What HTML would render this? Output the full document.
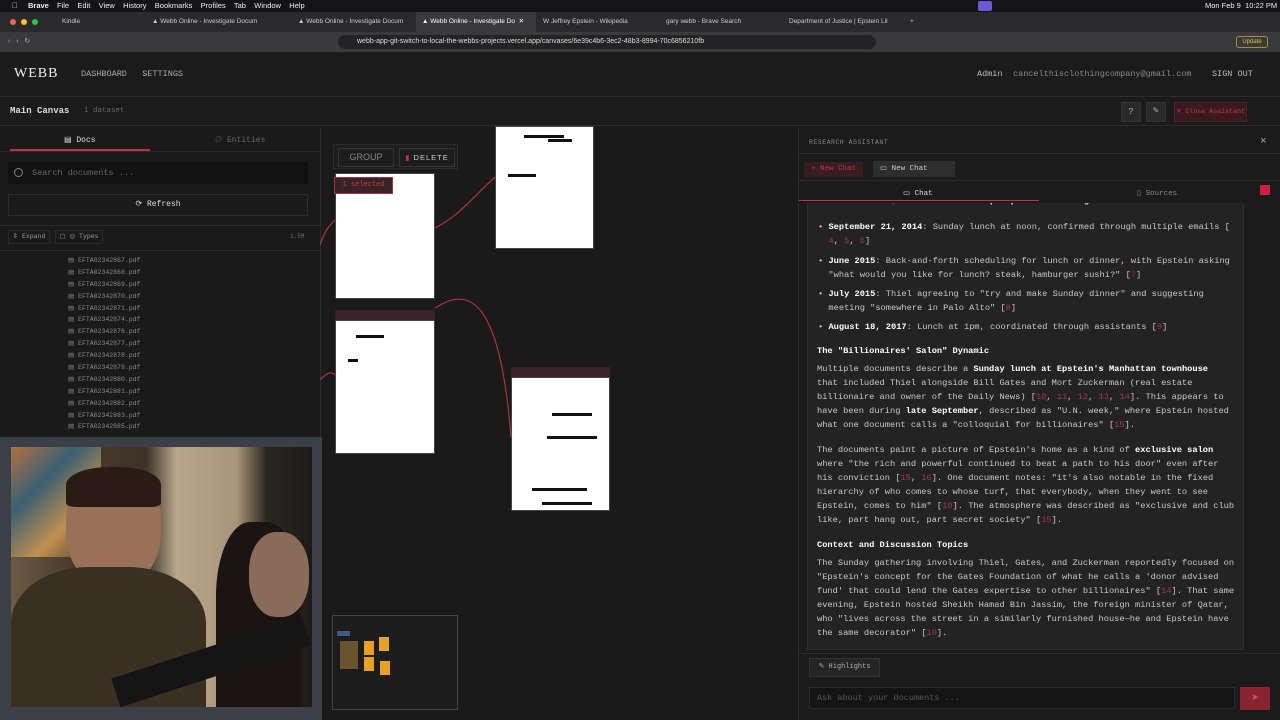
<!DOCTYPE html>
<html><head><meta charset="utf-8"><style>
*{box-sizing:border-box;margin:0;padding:0}
body{width:1280px;height:720px;overflow:hidden;background:#1a1a1a;font-family:"Liberation Mono",monospace;color:#ccc;position:relative}
.a{position:absolute;white-space:nowrap}
.sans{font-family:"Liberation Sans",sans-serif}
.doc{background:#fff;border:1px solid #444}
.bar{background:#111;height:3px;position:absolute}
.rt{font-size:8.7px;line-height:14px;color:#c8c8c8;white-space:nowrap}
.rt b{color:#fff}
.c{color:#a8324a}
.file{font-size:6.5px;color:#888;height:11.9px;line-height:11.9px}
</style></head><body>
<!-- menubar -->
<div class="a sans" style="left:0;top:0;width:1280px;height:12px;background:#141418;font-size:7.5px;color:#eee;line-height:12px">
<span class="a" style="left:12px">&#63743;</span><b class="a" style="left:28px">Brave</b><span class="a" style="left:57px">File&nbsp;&nbsp;&nbsp; Edit&nbsp;&nbsp;&nbsp; View&nbsp;&nbsp;&nbsp; History&nbsp;&nbsp;&nbsp; Bookmarks&nbsp;&nbsp;&nbsp; Profiles&nbsp;&nbsp;&nbsp; Tab&nbsp;&nbsp;&nbsp; Window&nbsp;&nbsp;&nbsp; Help</span>
<span class="a" style="left:978px;top:1px;width:14px;height:10px;background:#6b5bd6;border-radius:2px"></span>
<span class="a" style="left:1205px">Mon Feb 9&nbsp; 10:22 PM</span></div>
<!-- tabs -->
<div class="a sans" style="left:0;top:12px;width:1280px;height:20px;background:#2a2a2c;font-size:6.5px;color:#ccc;line-height:20px">
<span class="a" style="left:10px;top:7px;width:6px;height:6px;border-radius:3px;background:#ff5f57"></span>
<span class="a" style="left:21px;top:7px;width:6px;height:6px;border-radius:3px;background:#febc2e"></span>
<span class="a" style="left:32px;top:7px;width:6px;height:6px;border-radius:3px;background:#28c840"></span>
<span class="a" style="left:62px">Kindle</span>
<span class="a" style="left:152px">▲ Webb Online - Investigate Docum</span>
<span class="a" style="left:298px">▲ Webb Online - Investigate Docum</span>
<span class="a" style="left:416px;width:120px;height:20px;background:#3a3a3c;padding-left:6px;color:#fff">▲ Webb Online - Investigate Do &nbsp;✕</span>
<span class="a" style="left:543px">W Jeffrey Epstein - Wikipedia</span>
<span class="a" style="left:666px">gary webb - Brave Search</span>
<span class="a" style="left:789px">Department of Justice | Epstein Lil</span>
<span class="a" style="left:910px">+</span></div>
<!-- address bar -->
<div class="a sans" style="left:0;top:32px;width:1280px;height:20px;background:#3a3a3c;font-size:7px;color:#ddd;line-height:20px">
<span class="a" style="left:8px;color:#aaa">‹&nbsp;&nbsp; ›&nbsp;&nbsp; ↻</span>
<span class="a" style="left:338px;top:3px;width:538px;height:14px;background:#232325;border-radius:7px"></span>
<span class="a" style="left:357px">webb-app-git-switch-to-local-the-webbs-projects.vercel.app/canvases/6e39c4b6-3ec2-48b3-8994-70c6856210fb</span>
<span class="a" style="left:1236px;top:4px;width:32px;height:12px;border:1px solid #a89030;border-radius:3px;color:#d8c050;font-size:6px;line-height:10px;text-align:center">Update</span></div>
<!-- app header -->
<div class="a" style="left:0;top:52px;width:1280px;height:45px;border-bottom:1px solid #2c2c2c;background:#1b1b1b">
<span class="a" style="left:14px;top:14px;font-family:'Liberation Serif',serif;font-size:14px;color:#eee;letter-spacing:1px">WEBB</span>
<span class="a" style="left:81px;top:17px;font-size:8.5px;color:#aaa">DASHBOARD&nbsp;&nbsp; SETTINGS</span>
<span class="a" style="left:977px;top:17px;font-size:8.5px;color:#bbb">Admin</span>
<span class="a" style="left:1013px;top:17px;font-size:8.5px;color:#888">cancelthisclothingcompany@gmail.com</span>
<span class="a" style="left:1212px;top:17px;font-size:8.5px;color:#bbb">SIGN OUT</span></div>
<!-- subheader -->
<div class="a" style="left:0;top:98px;width:1280px;height:28px;border-bottom:1px solid #2c2c2c;background:#1b1b1b">
<span class="a" style="left:10px;top:8px;font-size:9px;color:#ddd;font-weight:bold">Main Canvas</span>
<span class="a" style="left:84px;top:9px;font-size:7.5px;color:#666">1 dataset</span>
<span class="a" style="left:1121px;top:4px;width:20px;height:20px;background:#2a2a2a;border:1px solid #333;color:#aaa;font-size:9px;text-align:center;line-height:18px">?</span>
<span class="a" style="left:1146px;top:4px;width:20px;height:20px;background:#2a2a2a;border:1px solid #333;color:#aaa;font-size:8px;text-align:center;line-height:18px">✎</span>
<span class="a" style="left:1174px;top:4px;width:73px;height:20px;background:#3a1a1e;border:1px solid #4a2228;color:#c23a4a;font-size:6.6px;line-height:18px;text-align:center;overflow:hidden">✕ Close Assistant</span></div>
<!-- left panel -->
<div class="a" style="left:0;top:127px;width:321px;height:320px;background:#1a1a1a;border-right:1px solid #2c2c2c">
<span class="a" style="left:64px;top:8px;font-size:8px;color:#ddd">▤ Docs</span>
<span class="a" style="left:215px;top:8px;font-size:8px;color:#666">⚇ Entities</span>
<span class="a" style="left:10px;top:22px;width:140px;height:2px;background:#c0304a"></span>
<span class="a" style="left:0;top:24px;width:320px;height:1px;background:#2a2a2a"></span>
<span class="a" style="left:8px;top:35px;width:300px;height:22px;background:#111;font-size:8.5px;color:#666;line-height:22px;padding-left:24px">Search documents ...</span>
<span class="a" style="left:14px;top:41px;width:9px;height:9px;border:1px solid #888;border-radius:50%"></span>
<span class="a" style="left:8px;top:67px;width:300px;height:22px;border:1px solid #2c2c2c;font-size:8px;color:#ddd;line-height:20px;text-align:center">⟳ Refresh</span>
<span class="a" style="left:0;top:98px;width:320px;height:1px;background:#2a2a2a"></span>
<span class="a" style="left:8px;top:103px;width:42px;height:14px;border:1px solid #2a2a2a;font-size:6.5px;color:#999;line-height:12px;text-align:center">⇕ Expand</span>
<span class="a" style="left:55px;top:103px;width:48px;height:14px;border:1px solid #2a2a2a;font-size:6.5px;color:#999;line-height:12px;text-align:center">▢ ◎ Types</span>
<span class="a" style="left:290px;top:106px;font-size:6px;color:#666">1.5M</span>
<span class="a" style="left:0;top:123px;width:320px;height:1px;background:#2a2a2a"></span>
<div class="a" style="left:68px;top:128px">
<div class="file">▤ EFTA02342867.pdf</div><div class="file">▤ EFTA02342868.pdf</div><div class="file">▤ EFTA02342869.pdf</div><div class="file">▤ EFTA02342870.pdf</div><div class="file">▤ EFTA02342871.pdf</div><div class="file">▤ EFTA02342874.pdf</div><div class="file">▤ EFTA02342876.pdf</div><div class="file">▤ EFTA02342877.pdf</div><div class="file">▤ EFTA02342878.pdf</div><div class="file">▤ EFTA02342879.pdf</div><div class="file">▤ EFTA02342880.pdf</div><div class="file">▤ EFTA02342881.pdf</div><div class="file">▤ EFTA02342882.pdf</div><div class="file">▤ EFTA02342883.pdf</div><div class="file">▤ EFTA02342885.pdf</div></div></div>
<!-- webcam -->
<div class="a" style="left:0;top:437px;width:322px;height:283px;background:#3a3f48"></div>
<div class="a" style="left:11px;top:447px;width:301px;height:260px;background:linear-gradient(90deg,#6b5a45 0%,#4a3a2c 20%,#3d3326 45%,#b8a68c 55%,#a89478 75%,#2a2622 85%,#1e1a18 100%);overflow:hidden">
<div class="a" style="left:0;top:0;width:90px;height:110px;background:linear-gradient(135deg,#b07040,#3a6070,#c09050,#4a3a30)"></div>
<div class="a" style="left:55px;top:20px;width:95px;height:120px;border-radius:45%;background:#9a7058"></div>
<div class="a" style="left:55px;top:20px;width:95px;height:40px;border-radius:45% 45% 10% 10%;background:#2a1c14"></div>
<div class="a" style="left:0;top:120px;width:195px;height:140px;border-radius:40% 40% 0 0;background:#3a3022"></div>
<div class="a" style="left:205px;top:75px;width:85px;height:185px;border-radius:40% 40% 0 0;background:#1a1412"></div>
<div class="a" style="left:238px;top:85px;width:60px;height:85px;border-radius:45%;background:#8a6a58"></div>
<div class="a" style="left:100px;top:200px;width:200px;height:30px;background:#151515;transform:rotate(-18deg)"></div></div>
<!-- canvas -->
<div class="a" style="left:333px;top:144px;width:125px;height:25px;border:1px solid #2c2c2c;background:#1d1d1d">
<span class="a" style="left:4px;top:3px;width:56px;height:19px;border:1px solid #333;font-family:'Liberation Sans';font-size:9px;color:#888;line-height:17px;text-align:center">GROUP</span>
<span class="a" style="left:65px;top:3px;width:56px;height:19px;border:1px solid #333;font-family:'Liberation Sans';font-size:7.5px;color:#ccc;line-height:17px;text-align:center;letter-spacing:1px"><span style="color:#c0304a">▮</span> DELETE</span></div>
<div class="a doc" style="left:335px;top:173px;width:100px;height:126px"></div>
<div class="a" style="left:334px;top:177px;width:59px;height:17px;background:#3a2226;border:1px solid #a33040;font-size:7px;color:#b0404a;line-height:15px;text-align:center">1 selected</div>
<div class="a doc" style="left:495px;top:126px;width:99px;height:123px"><div class="bar" style="left:28px;top:8px;width:40px"></div><div class="bar" style="left:12px;top:47px;width:28px"></div><div class="bar" style="left:52px;top:12px;width:24px"></div></div>
<div class="a" style="left:335px;top:310px;width:100px;height:10px;background:#3a2226"></div>
<div class="a doc" style="left:335px;top:320px;width:100px;height:134px"><div class="bar" style="left:20px;top:14px;width:28px"></div><div class="bar" style="left:12px;top:38px;width:10px"></div></div>
<div class="a" style="left:511px;top:367px;width:99px;height:10px;background:#3a2226"></div>
<div class="a doc" style="left:511px;top:377px;width:99px;height:134px"><div class="bar" style="left:40px;top:35px;width:40px"></div><div class="bar" style="left:35px;top:58px;width:50px"></div><div class="bar" style="left:20px;top:110px;width:55px"></div><div class="bar" style="left:30px;top:124px;width:50px"></div></div>
<svg class="a" style="left:320px;top:120px" width="480" height="600"><g fill="none" stroke="#b03040" stroke-width="1.2">
<path d="M115 108 C140 95,150 80,175 57"/><path d="M115 188 C150 165,180 180,191 317"/><path d="M0 125 C5 110,10 105,15 100"/><path d="M0 260 C5 255,10 250,15 255"/></g></svg>
<div class="a" style="left:332px;top:615px;width:126px;height:95px;border:1px solid #444;background:#1c1c1c">
<div class="a" style="left:4px;top:15px;width:13px;height:5px;background:#3a5a80"></div>
<div class="a" style="left:7px;top:25px;width:18px;height:28px;background:#6a5430"></div>
<div class="a" style="left:31px;top:25px;width:10px;height:14px;background:#e8a020"></div>
<div class="a" style="left:31px;top:41px;width:10px;height:14px;background:#e8a020"></div>
<div class="a" style="left:46px;top:21px;width:10px;height:14px;background:#e8a020"></div>
<div class="a" style="left:47px;top:45px;width:10px;height:14px;background:#e8a020"></div></div>
<!-- right panel -->
<div class="a" style="left:798px;top:127px;width:482px;height:593px;background:#1b1b1b;border-left:1px solid #2c2c2c">
<span class="a" style="left:10px;top:12px;font-size:6.5px;color:#888;letter-spacing:.5px">RESEARCH ASSISTANT</span>
<span class="a" style="left:461px;top:9px;font-size:11px;color:#aaa">×</span>
<span class="a" style="left:0;top:26px;width:482px;height:1px;background:#2c2c2c"></span>
<span class="a" style="left:5px;top:35px;width:59px;height:15px;background:#3a1d21;font-size:7.5px;color:#c0304a;line-height:15px;text-align:center">+ New Chat</span>
<span class="a" style="left:74px;top:34px;width:82px;height:16px;background:#2e2e2e;font-size:7.5px;color:#ccc;line-height:16px;padding-left:7px">▭ New Chat</span>
<span class="a" style="left:0;top:53px;width:482px;height:1px;background:#2c2c2c"></span>
<span class="a" style="left:104px;top:61px;font-size:7.5px;color:#ddd">▭ Chat</span>
<span class="a" style="left:338px;top:61px;font-size:7.5px;color:#888">▯ Sources</span>
<span class="a" style="left:461px;top:58px;width:10px;height:10px;background:#d02040"></span>
<span class="a" style="left:0;top:73px;width:240px;height:1px;background:#c0304a"></span>
<div class="a" style="left:8px;top:76px;width:437px;height:447px;background:#232323;border:1px solid #303030;border-top:none;overflow:hidden">
<div class="a rt" style="left:10px;top:-9px;color:#666">The documentary trail shows <b>multiple planned meetings</b>:</div>
<div class="a rt" style="left:10px;top:17px">•&nbsp;<b>September 21, 2014</b>: Sunday lunch at noon, confirmed through multiple emails [<br>&nbsp;&nbsp;<span class="c">4</span>, <span class="c">5</span>, <span class="c">6</span>]</div>
<div class="a rt" style="left:10px;top:51px">•&nbsp;<b>June 2015</b>: Back-and-forth scheduling for lunch or dinner, with Epstein asking<br>&nbsp;&nbsp;"what would you like for lunch? steak, hamburger sushi?" [<span class="c">7</span>]</div>
<div class="a rt" style="left:10px;top:84px">•&nbsp;<b>July 2015</b>: Thiel agreeing to "try and make Sunday dinner" and suggesting<br>&nbsp;&nbsp;meeting "somewhere in Palo Alto" [<span class="c">8</span>]</div>
<div class="a rt" style="left:10px;top:117px">•&nbsp;<b>August 18, 2017</b>: Lunch at 1pm, coordinated through assistants [<span class="c">9</span>]</div>
<div class="a rt" style="left:9px;top:141px"><b>The "Billionaires' Salon" Dynamic</b></div>
<div class="a rt" style="left:9px;top:159px">Multiple documents describe a <b>Sunday lunch at Epstein's Manhattan townhouse</b><br>that included Thiel alongside Bill Gates and Mort Zuckerman (real estate<br>billionaire and owner of the Daily News) [<span class="c">10</span>, <span class="c">11</span>, <span class="c">12</span>, <span class="c">13</span>, <span class="c">14</span>]. This appears to<br>have been during <b>late September</b>, described as "U.N. week," where Epstein hosted<br>what one document calls a "colloquial for billionaires" [<span class="c">15</span>].</div>
<div class="a rt" style="left:9px;top:240px">The documents paint a picture of Epstein's home as a kind of <b>exclusive salon</b><br>where "the rich and powerful continued to beat a path to his door" even after<br>his conviction [<span class="c">15</span>, <span class="c">16</span>]. One document notes: "it's also notable in the fixed<br>hierarchy of who comes to whose turf, that everybody, when they went to see<br>Epstein, comes to him" [<span class="c">10</span>]. The atmosphere was described as "exclusive and club<br>like, part hang out, part secret society" [<span class="c">15</span>].</div>
<div class="a rt" style="left:9px;top:335px"><b>Context and Discussion Topics</b></div>
<div class="a rt" style="left:9px;top:353px">The Sunday gathering involving Thiel, Gates, and Zuckerman reportedly focused on<br>"Epstein's concept for the Gates Foundation of what he calls a 'donor advised<br>fund' that could lend the Gates expertise to other billionaires" [<span class="c">14</span>]. That same<br>evening, Epstein hosted Sheikh Hamad Bin Jassim, the foreign minister of Qatar,<br>who "lives across the street in a similarly furnished house—he and Epstein have<br>the same decorator" [<span class="c">10</span>].</div></div>
<span class="a" style="left:0;top:526px;width:482px;height:1px;background:#2c2c2c"></span>
<span class="a" style="left:10px;top:531px;width:71px;height:19px;background:#252525;border:1px solid #333;font-size:7px;color:#aaa;line-height:17px;text-align:center">✎ Highlights</span>
<span class="a" style="left:10px;top:560px;width:426px;height:22px;background:#141414;border:1px solid #2a2a2a;font-size:8.5px;color:#555;line-height:20px;padding-left:7px">Ask about your documents ...</span>
<span class="a" style="left:441px;top:560px;width:30px;height:23px;background:#8a2330;color:#d05060;font-size:9px;line-height:23px;text-align:center">➤</span></div>
</body></html>
